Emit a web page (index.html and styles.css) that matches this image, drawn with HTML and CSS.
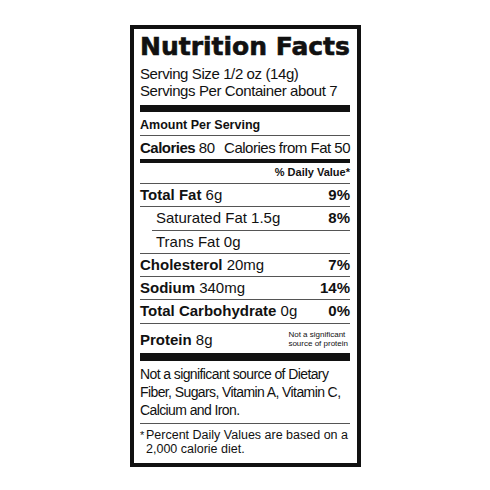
FILE: index.html
```html
<!DOCTYPE html>
<html lang="en">

<head>
    <meta charset="UTF-8">
    <meta name="viewport" content="width=device-width, initial-scale=1.0">
    <title>Nutrition Facts</title>
    <link rel="stylesheet" href="styles.css">
</head>

<body>
    <div class="label">
        <h1 class="title">Nutrition Facts</h1>
        <div class="serving">
            Serving Size 1/2 oz (14g)<br>
            Servings Per Container about 7
        </div>
        <div class="amount">Amount Per Serving</div>
        <div class="calories">
            <span><b>Calories</b> 80</span>
            <span>Calories from Fat 50</span>
        </div>
        <div class="dv">% Daily Value*</div>
        <div class="row">
            <span><b>Total Fat</b> 6g</span>
            <b>9%</b>
        </div>
        <div class="row sub inset">
            <span>Saturated Fat 1.5g</span>
            <b>8%</b>
        </div>
        <div class="row sub">
            <span>Trans Fat 0g</span>
        </div>
        <div class="row">
            <span><b>Cholesterol</b> 20mg</span>
            <b>7%</b>
        </div>
        <div class="row">
            <span><b>Sodium</b> 340mg</span>
            <b>14%</b>
        </div>
        <div class="row">
            <span><b>Total Carbohydrate</b> 0g</span>
            <b>0%</b>
        </div>
        <div class="protein">
            <span class="name"><b>Protein</b> 8g</span>
            <span class="note">Not a significant<br>source of protein</span>
        </div>
        <div class="footnote">
            Not a significant source of Dietary<br>
            Fiber, Sugars, Vitamin A, Vitamin C,<br>
            Calcium and Iron.
        </div>
        <div class="percent">
            <span class="star">*</span>
            <span>Percent Daily Values are based on a<br>2,000 calorie diet.</span>
        </div>
    </div>
</body>

</html>
```

FILE: styles.css
```css
body {
    margin: 0;
    background-color: #fff;
    color: #111;
    font-family: "Liberation Sans", Arial, sans-serif;
}

.label {
    box-sizing: border-box;
    width: 231px;
    margin: 25px 0 0 130px;
    padding: 4px 7px 0 6px;
    border: 4px solid #111;
}

.title {
    margin: 0;
    font-family: "DejaVu Sans", sans-serif;
    font-weight: bold;
    font-size: 25px;
    line-height: 28px;
    white-space: nowrap;
    -webkit-text-stroke: 0.6px #111;
}

.serving {
    font-size: 15px;
    letter-spacing: -0.4px;
    line-height: 17px;
    padding: 4px 0 6px;
    border-bottom: 7px solid #111;
}

.amount {
    font-weight: bold;
    font-size: 12.5px;
    line-height: 20px;
    padding-top: 3px;
    border-bottom: 1px solid #555;
}

.calories {
    display: flex;
    justify-content: space-between;
    font-size: 15px;
    letter-spacing: -0.5px;
    line-height: 23px;
    border-bottom: 4px solid #111;
}

.dv {
    text-align: right;
    font-weight: bold;
    font-size: 11px;
    line-height: 18px;
    padding-bottom: 2px;
    border-bottom: 1px solid #555;
}

.row {
    display: flex;
    justify-content: space-between;
    font-size: 15px;
    line-height: 22.3px;
    border-bottom: 1px solid #555;
}

.row.sub {
    padding-left: 16px;
}

.row.sub.inset {
    margin-left: 12px;
    padding-left: 4px;
}

.protein {
    display: flex;
    justify-content: space-between;
    align-items: flex-start;
    height: 29px;
    border-bottom: 8px solid #111;
}

.protein .name {
    font-size: 15px;
    line-height: 23px;
    padding-top: 4px;
}

.protein .note {
    font-size: 8px;
    line-height: 9px;
    margin-top: 6px;
    padding-right: 2px;
}

.footnote {
    font-size: 14px;
    letter-spacing: -0.6px;
    line-height: 18px;
    padding: 4px 0;
    border-bottom: 1px solid #555;
}

.percent {
    display: flex;
    font-size: 12.5px;
    line-height: 14px;
    padding: 4px 0 7px;
}

.percent .star {
    width: 6px;
    flex-shrink: 0;
    font-size: 11px;
}
```
